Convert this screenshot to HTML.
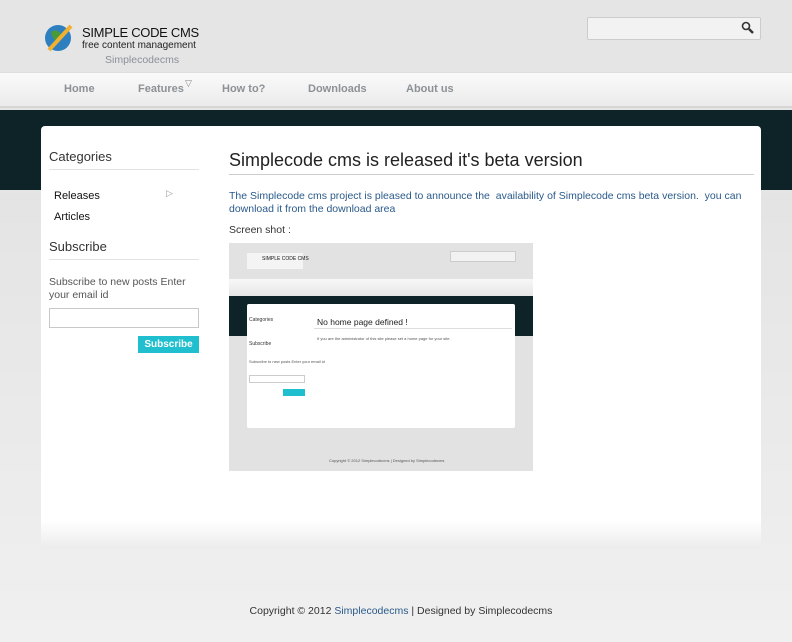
<!DOCTYPE html><html><head><style>
*{margin:0;padding:0;box-sizing:border-box}
body{width:792px;height:642px;overflow:hidden;font-family:"Liberation Sans",sans-serif;background:linear-gradient(#e6e5e5 0,#e6e5e5 190px,#e4e4e4 200px,#f0f0f0 642px);position:relative;font-size:11px;color:#333}
.a{position:absolute}
</style></head><body>
<div class="a" style="left:0;top:0;width:792px;height:72px;background:#e6e5e5"></div>
<svg class="a" style="left:43px;top:20px" width="34" height="34"><circle cx="15" cy="18" r="13" fill="#2d7fc0"/><path d="M8 12 q6-4 10 2 q-4 4-2 9 q-6-2-8-11z" fill="#4a9a3a"/><line x1="6" y1="30" x2="28" y2="6" stroke="#f0b030" stroke-width="4"/></svg>
<div class="a" style="left:82px;top:25px;font-size:13px;color:#111;letter-spacing:-0.3px">SIMPLE CODE CMS</div>
<div class="a" style="left:82px;top:40px;font-size:10px;color:#222">free content management</div>
<div class="a" style="left:105px;top:54px;font-size:10.5px;color:#8a8f9a">Simplecodecms</div>
<div class="a" style="left:587px;top:17px;width:174px;height:23px;background:#f2f2f2;border:1px solid #ccc;border-radius:2px"></div>
<svg class="a" style="left:741px;top:21px" width="14" height="14"><circle cx="5" cy="5" r="3.5" fill="none" stroke="#333" stroke-width="1.6"/><line x1="8" y1="8" x2="12" y2="12" stroke="#333" stroke-width="2.4"/></svg>
<div class="a" style="left:0;top:72px;width:792px;height:36px;background:linear-gradient(#fafafa,#ebebeb);border-top:1px solid #ddd;border-bottom:2px solid #d6d6d6"></div>
<div class="a" style="top:83px;left:64px;font-size:11px;font-weight:bold;color:#8c9196">Home</div>
<div class="a" style="top:83px;left:138px;font-size:11px;font-weight:bold;color:#8c9196">Features</div>
<div class="a" style="top:78px;left:185px;font-size:9px;color:#888">▽</div>
<div class="a" style="top:83px;left:222px;font-size:11px;font-weight:bold;color:#8c9196">How to?</div>
<div class="a" style="top:83px;left:308px;font-size:11px;font-weight:bold;color:#8c9196">Downloads</div>
<div class="a" style="top:83px;left:406px;font-size:11px;font-weight:bold;color:#8c9196">About us</div>
<div class="a" style="left:0;top:110px;width:792px;height:80px;background:#0e2328"></div>
<div class="a" style="left:41px;top:126px;width:720px;height:422px;background:linear-gradient(#fff 0,#fff 395px,#ececec 422px);border-radius:4px"></div>
<div class="a" style="left:49px;top:149px;font-size:13px;color:#333">Categories</div>
<div class="a" style="left:49px;top:169px;width:150px;border-top:1px solid #e3e3e3"></div>
<div class="a" style="left:54px;top:190px;font-size:11px;color:#111">Releases</div>
<div class="a" style="left:166px;top:188px;font-size:9px;color:#999">▷</div>
<div class="a" style="left:54px;top:211px;font-size:11px;color:#111">Articles</div>
<div class="a" style="left:49px;top:239px;font-size:13px;color:#333">Subscribe</div>
<div class="a" style="left:49px;top:259px;width:150px;border-top:1px solid #e3e3e3"></div>
<div class="a" style="left:49px;top:276px;width:150px;font-size:10.5px;line-height:13px;color:#555">Subscribe to new posts Enter your email id</div>
<div class="a" style="left:49px;top:308px;width:150px;height:20px;border:1px solid #c8c8c8"></div>
<div class="a" style="left:138px;top:336px;width:61px;height:17px;background:#1fbfcf;color:#fff;font-size:10px;font-weight:bold;text-align:center;line-height:17px">Subscribe</div>
<div class="a" style="left:229px;top:150px;font-size:18px;color:#222">Simplecode cms is released it's beta version</div>
<div class="a" style="left:229px;top:174px;width:525px;border-top:1px solid #ccc"></div>
<div class="a" style="left:229px;top:190px;width:520px;font-size:10.5px;line-height:13px;color:#2a5a8a">The Simplecode cms project is pleased to announce the&nbsp; availability of Simplecode cms beta version.&nbsp; you can download it from the download area</div>
<div class="a" style="left:229px;top:224px;font-size:10.5px;color:#333">Screen shot :</div>
<div class="a" style="left:229px;top:243px;width:304px;height:228px;background:#e2e2e2;overflow:hidden">
<div class="a" style="left:18px;top:10px;width:56px;height:16px;background:#f4f4f4"></div>
<div class="a" style="left:33px;top:13px;font-size:5px;color:#111">SIMPLE CODE CMS</div>
<div class="a" style="left:221px;top:8px;width:66px;height:11px;background:#f2f2f2;border:1px solid #ccc"></div>
<div class="a" style="left:0;top:36px;width:304px;height:17px;background:linear-gradient(#f8f8f8,#e6e6e6)"></div>
<div class="a" style="left:0;top:53px;width:304px;height:40px;background:#0e2328"></div>
<div class="a" style="left:18px;top:61px;width:268px;height:124px;background:#fff;border-radius:2px"></div>
<div class="a" style="left:88px;top:74px;font-size:8.5px;color:#222">No home page defined !</div>
<div class="a" style="left:85px;top:85px;width:198px;border-top:1px solid #ddd"></div>
<div class="a" style="left:88px;top:93px;font-size:4px;color:#555">If you are the administrator of this site please set a home page for your site.</div>
<div class="a" style="left:20px;top:74px;font-size:5px;color:#333">Categories</div>
<div class="a" style="left:20px;top:98px;font-size:5px;color:#333">Subscribe</div>
<div class="a" style="left:20px;top:116px;font-size:4px;color:#555">Subscribe to new posts Enter your email id</div>
<div class="a" style="left:20px;top:132px;width:56px;height:8px;border:1px solid #ccc"></div>
<div class="a" style="left:54px;top:146px;width:22px;height:7px;background:#1fbfcf"></div>
<div class="a" style="left:100px;top:215px;font-size:4px;color:#555">Copyright © 2012 Simplecodecms | Designed by Simplecodecms</div>
</div>
<div class="a" style="left:0;top:605px;width:802px;text-align:center;font-size:10.5px;color:#333">Copyright © 2012 <span style="color:#2a5a8a">Simplecodecms</span> | Designed by Simplecodecms</div>
</body></html>
